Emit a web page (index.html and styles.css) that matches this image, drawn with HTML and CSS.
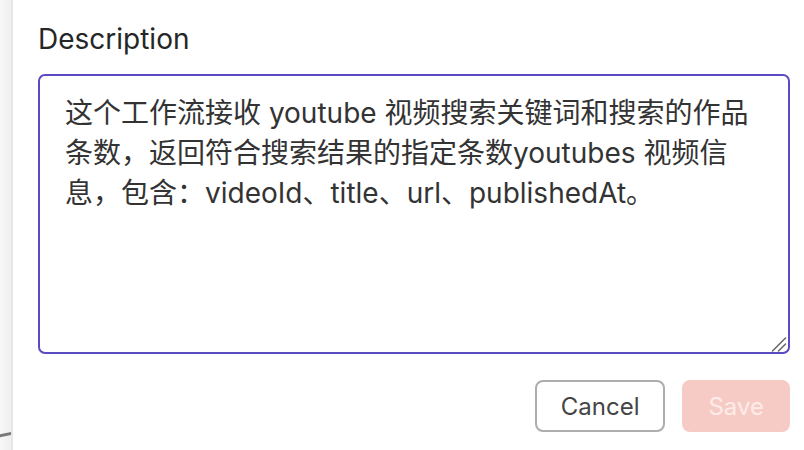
FILE: index.html
```html
<!DOCTYPE html>
<html lang="zh">
<head>
<meta charset="utf-8">
<link rel="stylesheet" href="styles.css">
</head>
<body>
<div class="page">
  <div class="side"><div class="edge"></div></div>
  <div class="dialog">
    <label class="label" for="desc">Description</label>
    <div class="field-wrap">
      <textarea id="desc" class="field" readonly>这个工作流接收 youtube 视频搜索关键词和搜索的作品条数，返回符合搜索结果的指定条数youtubes 视频信息，包含：videoId、title、url、publishedAt。</textarea>
      <svg class="grip" width="16" height="16" viewBox="0 0 16 16" aria-hidden="true">
        <path d="M1.5 15 L14.5 2 M7.5 15 L14.5 8" stroke="#6b6b6b" stroke-width="1.6" stroke-linecap="round" fill="none"/>
      </svg>
    </div>
    <div class="actions">
      <button class="btn cancel" type="button">Cancel</button>
      <button class="btn save" type="button" disabled>Save</button>
    </div>
  </div>
</div>
</body>
</html>
```

FILE: styles.css
```css
html, body {
  margin: 0;
  padding: 0;
  background: #fff;
}
body {
  width: 804px;
  height: 450px;
  overflow: hidden;
  font-family: Inter, "Noto Sans CJK SC", sans-serif;
}
.page {
  display: flex;
  height: 450px;
}
.side {
  position: relative;
  width: 11px;
  flex: none;
  background: linear-gradient(to right, #f7f7f7, #efefef);
  border-right: 2px solid #e6e6e6;
  overflow: hidden;
}
.edge {
  position: absolute;
  left: -4px;
  top: 433px;
  width: 20px;
  height: 3px;
  background: #7a7a7a;
  transform: rotate(-12deg);
}
.dialog {
  flex: 1;
  display: flex;
  flex-direction: column;
  padding: 22px 14px 0 25px;
}
.label {
  font-size: 28px;
  line-height: 34px;
  font-weight: 400;
  color: #262626;
  margin-bottom: 18px;
}
.field-wrap {
  position: relative;
  width: 752px;
  height: 280px;
}
.field {
  display: block;
  box-sizing: border-box;
  width: 752px;
  height: 280px;
  margin: 0;
  padding: 17px 38px 14px 25px;
  border: 2px solid #5a4bc2;
  border-radius: 7px;
  outline: none;
  font-family: Inter, "Noto Sans CJK SC", sans-serif;
  font-size: 28px;
  line-height: 40px;
  color: #333;
  resize: none;
  overflow: hidden;
  background: #fff;
}
.grip {
  position: absolute;
  right: 3px;
  bottom: 2px;
}
.actions {
  display: flex;
  justify-content: flex-end;
  gap: 17px;
  margin-top: 26px;
}
.btn {
  box-sizing: border-box;
  height: 52px;
  padding: 0 24px;
  border-radius: 8px;
  font-family: Inter, sans-serif;
  font-size: 24px;
  font-weight: 400;
}
.cancel {
  background: #fff;
  border: 2px solid #adadad;
  color: #454545;
}
.save {
  background: #f6cbc6;
  border: 2px solid #f6cbc6;
  color: #fdebe9;
}
```
